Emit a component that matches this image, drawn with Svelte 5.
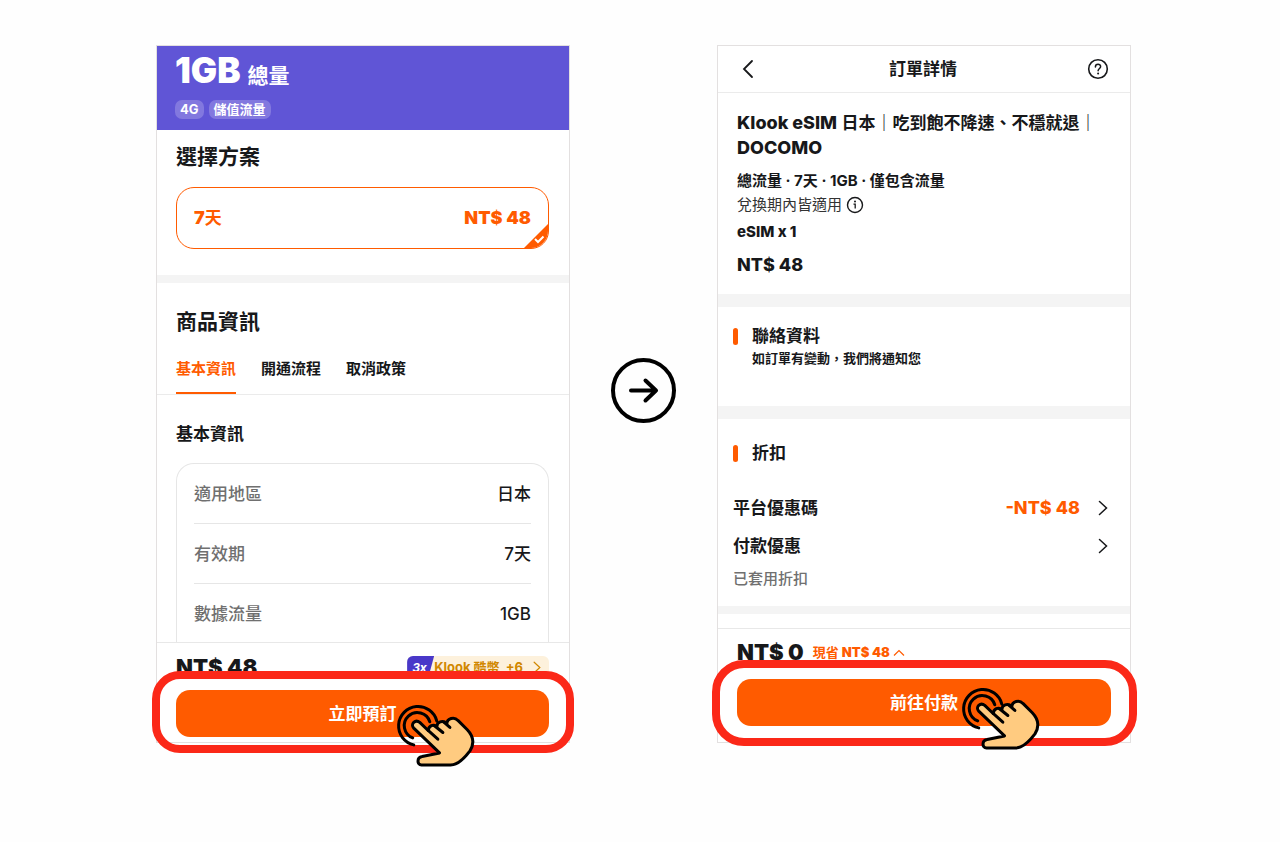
<script>
const tabs = ['基本資訊', '開通流程', '取消政策'];
const specs = [
	{ label: '適用地區', value: '日本' },
	{ label: '有效期', value: '7天' },
	{ label: '數據流量', value: '1GB' },
];

let activeTab = $state(0);
let planSelected = $state(true);
</script>

{#snippet tapHand()}
	<svg class="hand" viewBox="18 192 236 188" aria-hidden="true">
		<g fill="none" stroke="#000" stroke-width="9" stroke-linecap="round" stroke-linejoin="round">
			<path d="M71 314 A58 58 0 1 1 140 243" />
			<path d="M68 293 A39 39 0 1 1 119 245" />
			<path
				d="M148 338 L71 264 C60 252 76 236 89 247 L114 271 C116 257 129 250 140 260 C140 245 157 239 170 250 C171 235 192 229 203 241 L231 269 C250 289 252 311 239 332 C226 349 213 364 196 371 Q190 374 181 374 L94 374 C81 374 79 352 96 349 Z"
				fill="#ffcb80"
			/>
			<path d="M114 271 L143 297 M132 256 L158 277 M161 246 L179 262" />
		</g>
	</svg>
{/snippet}

{#snippet chevron()}
	<svg class="chevron" viewBox="0 0 10 16" aria-hidden="true">
		<path d="M1.5 1.5 8.5 8l-7 6.5" fill="none" stroke="currentColor" stroke-width="1.5" stroke-linecap="round" />
	</svg>
{/snippet}

<main class="page">
	<section class="panel">
		<header class="hero">
			<h1>1GB <small>總量</small></h1>
			<div class="chips">
				<span>4G</span>
				<span>儲值流量</span>
			</div>
		</header>

		<div class="choose">
			<h2>選擇方案</h2>
			<button class="plan" aria-pressed={planSelected} onclick={() => (planSelected = !planSelected)}>
				<span><b>7</b>天</span>
				<b>NT$ 48</b>
				{#if planSelected}
					<svg class="tick" viewBox="0 0 24 24" aria-hidden="true">
						<path d="M24 0V24H0Z" fill="#ff5b00" />
						<path d="m11 15 3 3 5.500-5.500" fill="none" stroke="#fff" stroke-width="2" />
					</svg>
				{/if}
			</button>
		</div>

		<div class="band thin"></div>

		<div class="info">
			<h2>商品資訊</h2>
			<div class="tabs" role="tablist">
				{#each tabs as tab, i}
					<button role="tab" aria-selected={activeTab === i} class:active={activeTab === i} onclick={() => (activeTab = i)}>{tab}</button>
				{/each}
			</div>
			<h3>{tabs[activeTab]}</h3>
			<dl class="specs">
				{#each specs as spec}
					<div>
						<dt>{spec.label}</dt>
						<dd>{spec.value}</dd>
					</div>
				{/each}
			</dl>
		</div>

		<footer class="pay">
			<div class="total">
				<strong>NT$ 48</strong>
				<a class="coins" href="#coins">
					<em>3x</em>
					<span>Klook 酷幣 &nbsp;+6</span>
					{@render chevron()}
				</a>
			</div>
			<div class="action">
				<button class="cta">立即預訂</button>
				<div class="ring"></div>
				{@render tapHand()}
			</div>
		</footer>
	</section>

	<svg class="next" viewBox="0 0 65 65" aria-hidden="true">
		<g fill="none" stroke="#000" stroke-width="4" stroke-linecap="round" stroke-linejoin="round">
			<circle cx="32.5" cy="32.5" r="30.500" />
			<path d="M20 32.500H45M34.500 22.500 45 32.500 34.500 42.500" />
		</g>
	</svg>

	<section class="panel order">
		<header class="bar">
			<button aria-label="返回">
				<svg viewBox="0 0 22 22">
					<path d="M15 3 7 11l8 8" fill="none" stroke="currentColor" stroke-width="1.800" stroke-linecap="round" />
				</svg>
			</button>
			<h2>訂單詳情</h2>
			<button aria-label="說明">
				<svg viewBox="0 0 22 22">
					<circle cx="11" cy="11" r="9.300" fill="none" stroke="currentColor" stroke-width="1.600" />
					<path d="M8.400 9C8.400 5.300 13.800 5.500 13.600 8.800C13.500 10.500 11.100 10.700 11.100 12.800" fill="none" stroke="currentColor" stroke-width="1.500" stroke-linecap="round" />
					<circle cx="11.100" cy="15.600" r="1" fill="currentColor" />
				</svg>
			</button>
		</header>

		<div class="product">
			<h3><b>Klook eSIM</b> 日本｜吃到飽不降速、不穩就退｜<br /><b>DOCOMO</b></h3>
			<p class="variant">總流量 · 7天 · 1GB · 僅包含流量</p>
			<p class="validity">
				兌換期內皆適用
				<svg viewBox="0 0 18 18" aria-hidden="true">
					<circle cx="9" cy="9" r="7.500" fill="none" stroke="currentColor" stroke-width="1.400" />
					<circle cx="9" cy="5.500" r="1" fill="currentColor" />
					<path d="M7.500 8.200H9.200V12.500" fill="none" stroke="currentColor" stroke-width="1.300" />
				</svg>
			</p>
			<p class="quantity">eSIM x 1</p>
			<p class="price">NT$ 48</p>
		</div>

		<div class="band"></div>

		<div class="contact">
			<h3 class="marked">聯絡資料</h3>
			<p>如訂單有變動，我們將通知您</p>
		</div>

		<div class="band"></div>

		<div class="discount">
			<h3 class="marked">折扣</h3>
			<button class="row">
				<span>平台優惠碼</span>
				<strong>-NT$ 48</strong>
				{@render chevron()}
			</button>
			<button class="row">
				<span>付款優惠</span>
				{@render chevron()}
			</button>
			<p>已套用折扣</p>
		</div>

		<div class="band thin"></div>

		<footer class="pay">
			<div class="total">
				<strong>NT$ 0</strong>
				<a class="saved" href="#saved">
					現省 <b>NT$ 48</b>
					<svg viewBox="0 0 12 8" aria-hidden="true">
						<path d="M1 6.500 6 1.500l5 5" fill="none" stroke="currentColor" stroke-width="1.200" />
					</svg>
				</a>
			</div>
			<div class="action">
				<button class="cta">前往付款</button>
				<div class="ring"></div>
				{@render tapHand()}
			</div>
		</footer>
	</section>
</main>

<style>
	:global(body) {
		margin: 0;
		background: #fefefe;
	}
	.page {
		display: flex;
		align-items: flex-start;
		gap: 41px;
		padding: 45px 149px 45px 156px;
		font-family: Inter, 'Noto Sans CJK TC', sans-serif;
		font-size: 17px;
		line-height: 24px;
		color: #17181a;
	}
	h1,
	h2,
	h3,
	p,
	dl,
	dd {
		margin: 0;
	}
	h2,
	h3 {
		font-weight: 600;
	}
	h3 {
		font-size: 17px;
	}
	b {
		line-height: 20px;
		font-weight: 900;
	}
	button {
		margin: 0;
		padding: 0;
		border: 0;
		background: none;
		font: inherit;
		color: inherit;
		cursor: pointer;
	}
	a {
		color: inherit;
		text-decoration: none;
	}
	.panel {
		flex: 1;
		min-width: 0;
		box-sizing: border-box;
		border: 1px solid #e3e0e0;
		background: #fff;
	}
	.band {
		height: 13px;
		background: #f4f4f4;
	}
	.band.thin {
		height: 8px;
	}

	/* plan picker */
	.hero {
		height: 84px;
		padding: 4px 18px 0;
		box-sizing: border-box;
		background: #6055d6;
		color: #fff;
	}
	.hero h1 {
		font-size: 35px;
		line-height: 40px;
		font-weight: 900;
	}
	.hero small {
		font-size: 21px;
		line-height: 24px;
		font-weight: 600;
	}
	.chips {
		display: flex;
		gap: 5px;
		margin-top: 10px;
		font-size: 13px;
		line-height: 19px;
		font-weight: 700;
	}
	.chips span {
		padding: 0 5px;
		border-radius: 7px;
		background: #8278df;
	}
	.choose {
		padding: 12px 20px 26px 19px;
	}
	.choose h2,
	.info h2 {
		font-size: 21px;
		line-height: 30px;
	}
	.plan {
		position: relative;
		display: flex;
		align-items: center;
		justify-content: space-between;
		width: 100%;
		height: 62px;
		margin-top: 15px;
		padding: 0 17px;
		border: 1px solid #ff5b00;
		border-radius: 18px;
		overflow: hidden;
		font-weight: 600;
		color: #ff5b00;
	}
	.plan b {
		font-size: 18px;
	}
	.tick {
		position: absolute;
		right: 0;
		bottom: 0;
		width: 24px;
		height: 24px;
	}
	.info {
		padding: 24px 20px 0 19px;
	}
	.tabs {
		display: flex;
		gap: 25px;
		height: 57px;
		margin: 0 -20px 0 -19px;
		padding: 0 19px;
		border-bottom: 1px solid #ebebeb;
		font-size: 15px;
	}
	.tabs button {
		padding-top: 8px;
		border-bottom: 2px solid transparent;
		font-weight: 600;
	}
	.tabs .active {
		border-color: #ff5b00;
		color: #ff5b00;
	}
	.info h3 {
		margin-top: 27px;
	}
	.specs {
		margin-top: 17px;
		padding: 0 17px;
		border: 1px solid #e6e6e6;
		border-bottom: 0;
		border-radius: 18px 18px 0 0;
	}
	.specs div {
		display: flex;
		justify-content: space-between;
		padding: 18px 0 17px;
		border-bottom: 1px solid #e6e6e6;
	}
	.specs div:last-child {
		padding-bottom: 16px;
		border-bottom: 0;
	}
	.specs dt {
		font-weight: 500;
		color: #707070;
	}
	.specs dd {
		font-weight: 500;
	}

	/* bottom bar */
	.pay {
		padding: 9px 20px 5px 19px;
		border-top: 1px solid #e8e8e8;
	}
	.total {
		display: flex;
		align-items: center;
		height: 30px;
	}
	.total strong {
		font-size: 22px;
		font-weight: 900;
	}
	.coins {
		display: flex;
		align-items: center;
		gap: 5px;
		height: 22px;
		margin-left: auto;
		padding-right: 7px;
		border-radius: 6px;
		overflow: hidden;
		background: #fdf1dc;
		font-size: 13px;
		font-weight: 700;
		color: #d18700;
	}
	.coins em {
		width: 27px;
		height: 100%;
		margin-right: -5px;
		background: #4938c9;
		clip-path: polygon(0 0, 100% 0, 78% 100%, 0 100%);
		font-size: 12px;
		text-indent: 5px;
		color: #fff;
	}
	.coins .chevron {
		height: 13px;
		margin-left: 4px;
	}
	.action {
		position: relative;
		margin-top: 8px;
	}
	.cta {
		display: block;
		width: 100%;
		height: 47px;
		border-radius: 14px;
		background: #ff5b00;
		font-weight: 600;
		color: #fff;
	}
	.ring {
		position: absolute;
		inset: -19px -25px -16px -24px;
		border: 8px solid #fb2818;
		border-radius: 28px;
		pointer-events: none;
	}
	.hand {
		position: absolute;
		top: 14px;
		left: calc(50% + 33px);
		width: 79px;
		height: 63px;
		pointer-events: none;
	}
	.next {
		flex: none;
		width: 65px;
		height: 65px;
		margin-top: 313px;
	}

	/* order details */
	.bar {
		display: flex;
		align-items: center;
		justify-content: space-between;
		height: 46px;
		padding: 0 21px 0 19px;
		border-bottom: 1px solid #ebebeb;
	}
	.bar h2 {
		font-size: 17px;
	}
	.bar svg {
		display: block;
		width: 22px;
		height: 22px;
	}
	.product {
		padding: 18px 19px 17px;
		font-size: 15px;
	}
	.product h3 {
		line-height: 25px;
		white-space: nowrap;
	}
	.product h3 b {
		font-size: 18px;
		font-weight: 800;
	}
	.variant {
		margin-top: 8px;
		font-weight: 700;
	}
	.validity {
		display: flex;
		align-items: center;
		gap: 4px;
		color: #333;
	}
	.validity svg {
		width: 18px;
		height: 18px;
		color: #17181a;
	}
	.quantity {
		margin-top: 3px;
		font-weight: 800;
	}
	.price {
		margin-top: 9px;
		font-size: 18px;
		font-weight: 800;
	}
	.marked {
		display: flex;
		align-items: center;
		gap: 14px;
	}
	.marked::before {
		content: '';
		width: 5px;
		height: 17px;
		border-radius: 3px;
		background: #ff5b00;
	}
	.contact {
		padding: 17px 15px 38px;
	}
	.contact p {
		padding-left: 19px;
		font-size: 13px;
		line-height: 20px;
		font-weight: 600;
	}
	.discount {
		padding: 22px 22px 15px 15px;
	}
	.row {
		display: flex;
		align-items: center;
		width: 100%;
		height: 38px;
		font-weight: 600;
	}
	.discount .marked {
		margin-bottom: 24px;
	}
	.row span {
		flex: 1;
		text-align: left;
	}
	.row strong {
		margin-right: 18px;
		font-size: 18px;
		font-weight: 800;
		color: #ff5b00;
	}
	.chevron {
		width: 10px;
		height: 16px;
	}
	.discount p {
		margin-top: 2px;
		font-size: 15px;
		font-weight: 500;
		color: #707070;
	}
	.order .pay {
		margin-top: 14px;
		padding: 8px 19px 16px;
	}
	.order .action {
		margin-top: 12px;
	}
	.order .ring {
		inset: -19px -26px -20px -25px;
		border-radius: 32px;
	}
	.order .hand {
		top: 8px;
		left: calc(50% + 37px);
	}
	.saved {
		margin-left: 9px;
		font-size: 13px;
		font-weight: 700;
		color: #ff5b00;
	}
	.saved svg {
		width: 12px;
		height: 8px;
	}
</style>
